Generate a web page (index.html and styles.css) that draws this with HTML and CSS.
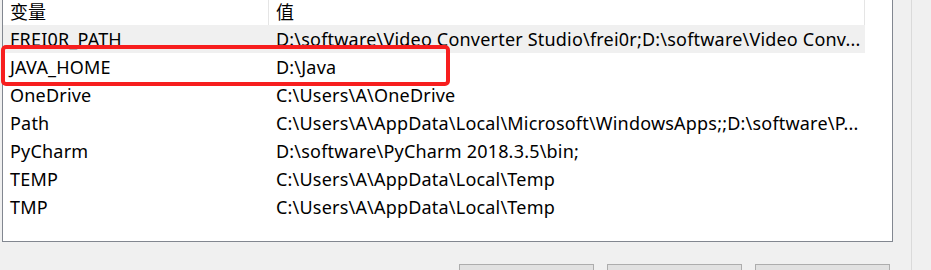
FILE: index.html
```html
<!DOCTYPE html>
<html>
<head>
<meta charset="utf-8">
<link rel="stylesheet" href="styles.css">
</head>
<body>
<div class="page">
  <div class="main">
    <div class="listbox">
      <div class="header">
        <div class="hcell c1">变量</div>
        <div class="hcell c2">值</div>
      </div>
      <div class="row selected"><div class="cell c1">FREI0R_PATH</div><div class="cell c2">D:\software\Video Converter Studio\frei0r;D:\software\Video Conv...</div></div>
      <div class="row"><div class="cell c1">JAVA_HOME</div><div class="cell c2">D:\Java</div></div>
      <div class="row"><div class="cell c1">OneDrive</div><div class="cell c2">C:\Users\A\OneDrive</div></div>
      <div class="row"><div class="cell c1">Path</div><div class="cell c2">C:\Users\A\AppData\Local\Microsoft\WindowsApps;;D:\software\P...</div></div>
      <div class="row"><div class="cell c1">PyCharm</div><div class="cell c2">D:\software\PyCharm 2018.3.5\bin;</div></div>
      <div class="row"><div class="cell c1">TEMP</div><div class="cell c2">C:\Users\A\AppData\Local\Temp</div></div>
      <div class="row"><div class="cell c1">TMP</div><div class="cell c2">C:\Users\A\AppData\Local\Temp</div></div>
      <div class="highlight"></div>
    </div>
    <div class="buttons">
      <div class="btn"></div>
      <div class="btn"></div>
      <div class="btn"></div>
    </div>
  </div>
  <div class="side"></div>
</div>
</body>
</html>
```
FILE: styles.css
```css
html, body {
  margin: 0;
  padding: 0;
  background: #f0f0f0;
  overflow: hidden;
}
body {
  width: 931px;
  height: 270px;
  font-family: "Noto Sans", "Noto Sans CJK SC", sans-serif;
  font-size: 18px;
  color: #000;
}
.page {
  display: flex;
  height: 270px;
  overflow: hidden;
}
.main {
  width: 893px;
  padding-left: 2px;
  box-sizing: border-box;
}
.listbox {
  position: relative;
  width: 891px;
  height: 242px;
  box-sizing: border-box;
  background: #fff;
  border: 1px solid #828790;
  border-top: none;
}
.header {
  display: flex;
  height: 25px;
}
.hcell {
  box-sizing: border-box;
  border-right: 1px solid #e5e5e5;
  line-height: 24px;
  padding-left: 7px;
  white-space: nowrap;
  overflow: hidden;
}
.header .c1 { width: 266px; }
.header .c2 { width: 596px; }
.row {
  display: flex;
  width: 862px;
  height: 28px;
}
.row.selected {
  background: #f0f0f0;
}
.cell {
  box-sizing: border-box;
  line-height: 28px;
  white-space: nowrap;
  letter-spacing: 0.2px;
}
.row .c1 { width: 266px; padding-left: 7px; }
.row .c2 { width: 596px; padding-left: 7px; }
.highlight {
  position: absolute;
  left: -2px;
  top: 45px;
  width: 449px;
  height: 41px;
  box-sizing: border-box;
  border: 4px solid #f71e1e;
  border-radius: 5px;
}
.buttons {
  display: flex;
  justify-content: flex-end;
  gap: 13px;
  padding-top: 22px;
  padding-right: 3px;
}
.btn {
  width: 135px;
  height: 30px;
  box-sizing: border-box;
  background: #e1e1e1;
  border: 1px solid #adadad;
}
.side {
  width: 18px;
  border-right: 1px solid #dadada;
}
```
